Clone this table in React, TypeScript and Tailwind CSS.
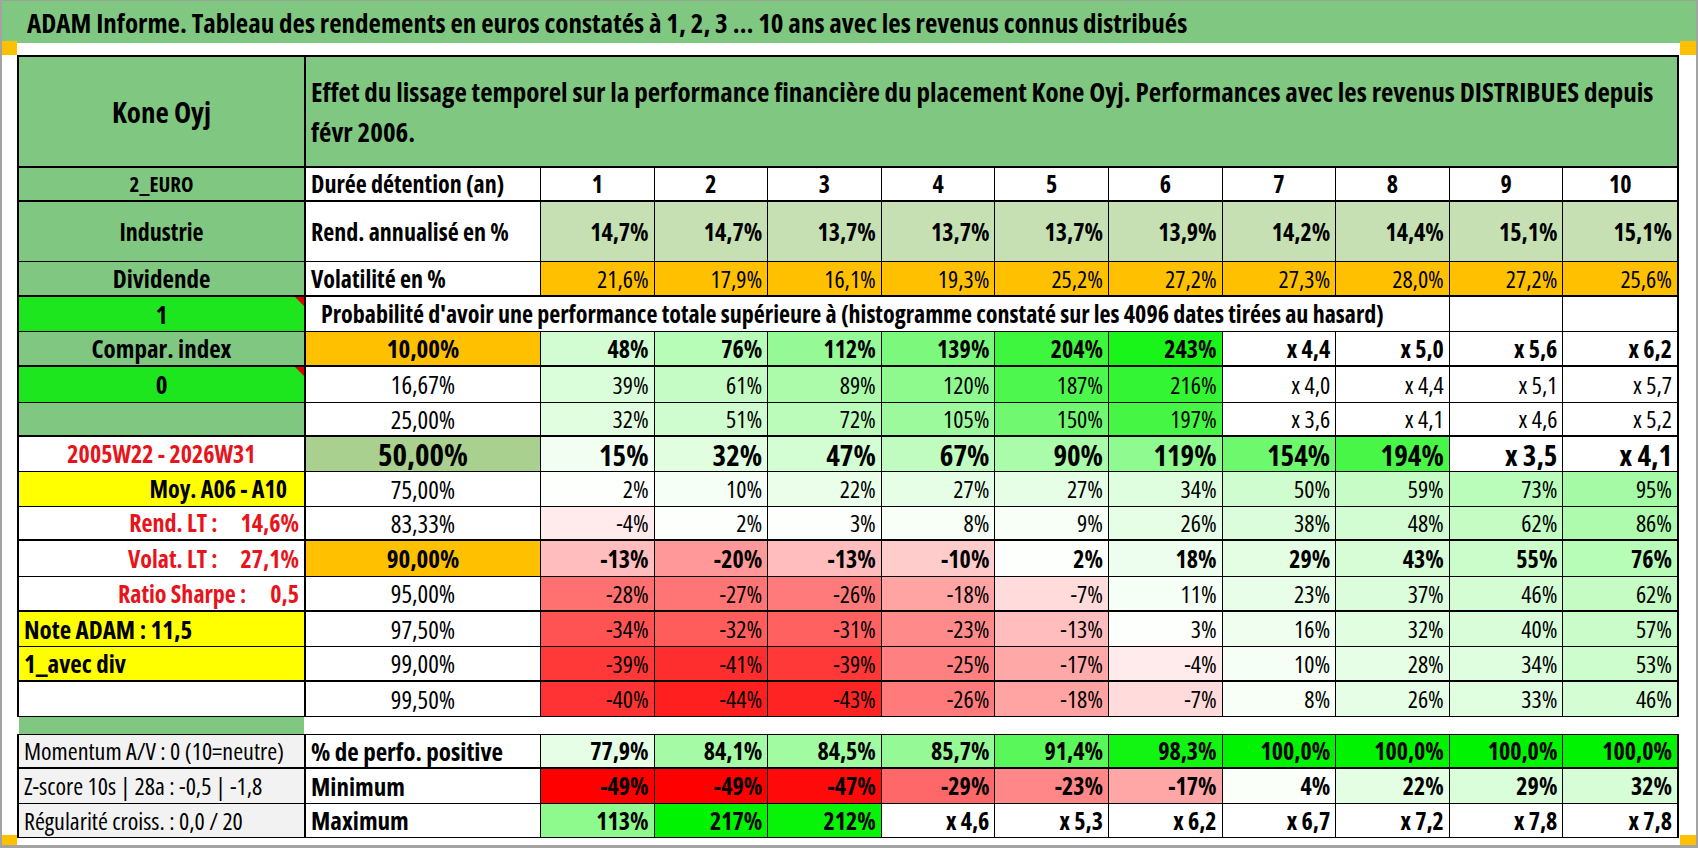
import React from "react";

const clamp = (t: number) => Math.max(0, Math.min(1, t));
const green = (t: number) => {
  const k = clamp(t);
  const r = Math.round(255 * (1 - k));
  const g = Math.round(255 - 12 * k);
  return `rgb(${r},${g},${r})`;
};
const red = (t: number) => {
  const k = clamp(t);
  const c = Math.round(255 * (1 - k));
  return `rgb(255,${c},${c})`;
};
const num = (s: string) => (s.startsWith("x") ? null : parseFloat(s.replace(",", ".").replace("%", "")));
const mainColor = (s: string) => {
  const v = num(s);
  if (v === null) return "#ffffff";
  return v >= 0 ? green(v / 270) : red(-v / 50);
};

type Row = {
  h: string;
  b: string;
  left: React.ReactNode;
  leftCls: string;
  tri?: boolean;
  p: string;
  pCls: string;
  vals: string[];
  vCls: string;
};

const rows: Row[] = [
  {
    h: "h-[35px]", b: "border-b-2", left: "Compar. index", leftCls: "bg-[#80c882] justify-center font-bold text-[25px]",
    p: "10,00%", pCls: "bg-[#ffc000] font-bold text-[25px]",
    vals: ["48%", "76%", "112%", "139%", "204%", "243%", "x 4,4", "x 5,0", "x 5,6", "x 6,2"], vCls: "font-bold text-[24px]",
  },
  {
    h: "h-[36px]", b: "border-b", left: "0", leftCls: "bg-[#1ee61e] justify-center font-bold text-[25px]", tri: true,
    p: "16,67%", pCls: "bg-white text-[25px]",
    vals: ["39%", "61%", "89%", "120%", "187%", "216%", "x 4,0", "x 4,4", "x 5,1", "x 5,7"], vCls: "text-[24px]",
  },
  {
    h: "h-[34px]", b: "border-b-2", left: "", leftCls: "bg-[#80c882]",
    p: "25,00%", pCls: "bg-white text-[25px]",
    vals: ["32%", "51%", "72%", "105%", "150%", "197%", "x 3,6", "x 4,1", "x 4,6", "x 5,2"], vCls: "text-[24px]",
  },
  {
    h: "h-[35px]", b: "border-b", left: "2005W22 - 2026W31", leftCls: "bg-white justify-center font-bold text-[24px] text-[#e8141b]",
    p: "50,00%", pCls: "bg-[#a9d08e] font-bold text-[31px]",
    vals: ["15%", "32%", "47%", "67%", "90%", "119%", "154%", "194%", "x 3,5", "x 4,1"], vCls: "font-bold text-[29px]",
  },
  {
    h: "h-[35px]", b: "border-b", left: "Moy. A06 - A10", leftCls: "bg-[#ffff00] justify-end pr-[17px] font-bold text-[24px]",
    p: "75,00%", pCls: "bg-white text-[25px]",
    vals: ["2%", "10%", "22%", "27%", "27%", "34%", "50%", "59%", "73%", "95%"], vCls: "text-[24px]",
  },
  {
    h: "h-[34px]", b: "border-b-2",
    left: (<><span>Rend. LT :</span><span>14,6%</span></>),
    leftCls: "bg-white justify-end gap-[23px] pr-[5px] font-bold text-[24px] text-[#e8141b]",
    p: "83,33%", pCls: "bg-white text-[25px]",
    vals: ["-4%", "2%", "3%", "8%", "9%", "26%", "38%", "48%", "62%", "86%"], vCls: "text-[24px]",
  },
  {
    h: "h-[36px]", b: "border-b",
    left: (<><span>Volat. LT :</span><span>27,1%</span></>),
    leftCls: "bg-white justify-end gap-[23px] pr-[5px] font-bold text-[24px] text-[#e8141b]",
    p: "90,00%", pCls: "bg-[#ffc000] font-bold text-[25px]",
    vals: ["-13%", "-20%", "-13%", "-10%", "2%", "18%", "29%", "43%", "55%", "76%"], vCls: "font-bold text-[24px]",
  },
  {
    h: "h-[35px]", b: "border-b-2",
    left: (<><span>Ratio Sharpe :</span><span>0,5</span></>),
    leftCls: "bg-white justify-end gap-[24px] pr-[5px] font-bold text-[24px] text-[#e8141b]",
    p: "95,00%", pCls: "bg-white text-[25px]",
    vals: ["-28%", "-27%", "-26%", "-18%", "-7%", "11%", "23%", "37%", "46%", "62%"], vCls: "text-[24px]",
  },
  {
    h: "h-[35px]", b: "border-b", left: "Note ADAM : 11,5", leftCls: "bg-[#ffff00] justify-start pl-[5px] font-bold text-[25px]",
    p: "97,50%", pCls: "bg-white text-[25px]",
    vals: ["-34%", "-32%", "-31%", "-23%", "-13%", "3%", "16%", "32%", "40%", "57%"], vCls: "text-[24px]",
  },
  {
    h: "h-[35px]", b: "border-b-2", left: "1_avec div", leftCls: "bg-[#ffff00] justify-start pl-[5px] font-bold text-[25px]",
    p: "99,00%", pCls: "bg-white text-[25px]",
    vals: ["-39%", "-41%", "-39%", "-25%", "-17%", "-4%", "10%", "28%", "34%", "53%"], vCls: "text-[24px]",
  },
  {
    h: "h-[35px]", b: "border-b", left: "", leftCls: "bg-white",
    p: "99,50%", pCls: "bg-white text-[25px]",
    vals: ["-40%", "-44%", "-43%", "-26%", "-18%", "-7%", "8%", "26%", "33%", "46%"], vCls: "text-[24px]",
  },
];

const GRID = "grid grid-cols-[287px_235px_repeat(10,minmax(0,1fr))]";
const CELL = "flex items-center whitespace-nowrap leading-none border-black";

function Tri() {
  return (
    <span className="absolute top-0 right-0 w-0 h-0 border-t-[9px] border-t-[#e00000] border-l-[9px] border-l-transparent" />
  );
}

function ValueCells({ vals, cls, color }: { vals: string[]; cls: string; color: (s: string) => string }) {
  return (
    <>
      {vals.map((v, i) => (
        <div
          key={i}
          className={`${CELL} justify-end pr-[5px] ${i < 9 ? "border-r" : ""} ${cls}`}
          style={{ backgroundColor: color(v) }}
        >
          {v}
        </div>
      ))}
    </>
  );
}

const posColor = (s: string) => {
  const v = num(s) ?? 0;
  return green((v - 75.5) / 24.5);
};
const minColor = (s: string) => {
  const v = num(s) ?? 0;
  return v >= 0 ? green(v / 200) : red(-v / 49);
};
const maxColor = (s: string) => {
  const v = num(s);
  if (v === null) return "#ffffff";
  return green((v - 30) / 187);
};

export default function App() {
  return (
    <div className="relative w-[1698px] h-[848px] bg-white overflow-hidden text-black font-['Liberation_Sans_Narrow','Open_Sans','Liberation_Sans',sans-serif] [font-stretch:condensed] border-x-2 border-b-[3px] border-[#a3a3a3]">
      {/* Title bar */}
      <div className="h-[43px] bg-[#80c882] border-t border-[#9aa59a] flex items-center pl-[25px] font-bold text-[27px] leading-none whitespace-nowrap">
        ADAM Informe. Tableau des rendements en euros constatés à 1, 2, 3 … 10 ans avec les revenus connus distribués
      </div>

      {/* Main table */}
      <div className="ml-[15px] mt-[12px] w-[1662px]">
        <div className="border-t-2 border-x-2 border-black">
          {/* header row */}
          <div className={`${GRID} h-[111px] border-b-2 border-black`}>
            <div className={`${CELL} justify-center bg-[#80c882] border-r-2 font-bold text-[29px]`}>Kone Oyj</div>
            <div className="col-span-11 bg-[#80c882] flex flex-col justify-center pl-[5px] font-bold text-[27px] leading-[40px] whitespace-nowrap">
              <span>Effet du lissage temporel sur la performance financière du placement Kone Oyj. Performances avec les revenus DISTRIBUES depuis</span>
              <span>févr 2006.</span>
            </div>
          </div>

          {/* 2_EURO row */}
          <div className={`${GRID} h-[34px] border-b-2 border-black`}>
            <div className={`${CELL} justify-center bg-[#80c882] border-r-2 font-bold text-[21px]`}>2_EURO</div>
            <div className={`${CELL} pl-[5px] bg-white border-r font-bold text-[24px]`}>Durée détention (an)</div>
            {Array.from({ length: 10 }, (_, i) => (
              <div key={i} className={`${CELL} justify-center bg-white font-bold text-[24px] ${i < 9 ? "border-r" : ""}`}>
                {i + 1}
              </div>
            ))}
          </div>

          {/* Industrie row */}
          <div className={`${GRID} h-[60px] border-b border-black`}>
            <div className={`${CELL} justify-center bg-[#80c882] border-r-2 font-bold text-[24px]`}>Industrie</div>
            <div className={`${CELL} pl-[5px] bg-white border-r font-bold text-[24px]`}>Rend. annualisé en %</div>
            <ValueCells
              vals={["14,7%", "14,7%", "13,7%", "13,7%", "13,7%", "13,9%", "14,2%", "14,4%", "15,1%", "15,1%"]}
              cls="font-bold text-[24px]"
              color={() => "#c6e0b4"}
            />
          </div>

          {/* Dividende row */}
          <div className={`${GRID} h-[35px] border-b-2 border-black`}>
            <div className={`${CELL} justify-center bg-[#80c882] border-r-2 font-bold text-[25px]`}>Dividende</div>
            <div className={`${CELL} pl-[5px] bg-white border-r font-bold text-[24px]`}>Volatilité en %</div>
            <ValueCells
              vals={["21,6%", "17,9%", "16,1%", "19,3%", "25,2%", "27,2%", "27,3%", "28,0%", "27,2%", "25,6%"]}
              cls="text-[24px]"
              color={() => "#ffc000"}
            />
          </div>

          {/* Probabilité row */}
          <div className={`${GRID} h-[35px] border-b border-black`}>
            <div className={`${CELL} relative justify-center bg-[#1ee61e] border-r-2 font-bold text-[25px]`}>
              1
              <Tri />
            </div>
            <div className={`${CELL} col-span-9 pl-[15px] bg-white border-r font-bold text-[24px]`}>
              Probabilité d'avoir une performance totale supérieure à (histogramme constaté sur les 4096 dates tirées au hasard)
            </div>
            <div className={`${CELL} bg-white border-r`} />
            <div className={`${CELL} bg-white`} />
          </div>

          {rows.map((r, idx) => (
            <div key={idx} className={`${GRID} ${r.h} ${r.b} border-black`}>
              <div className={`${CELL} relative border-r-2 ${r.leftCls}`}>
                {r.left}
                {r.tri && <Tri />}
              </div>
              <div className={`${CELL} justify-center border-r ${r.pCls}`}>{r.p}</div>
              <ValueCells vals={r.vals} cls={r.vCls} color={mainColor} />
            </div>
          ))}
        </div>

        {/* separator strip */}
        <div className={`${GRID} h-[17px]`}>
          <div className="bg-[#80c882] ml-[2px]" />
        </div>

        {/* bottom block */}
        <div className="border-t border-x-2 border-black">
          <div className={`${GRID} h-[34px] border-b-2 border-black`}>
            <div className={`${CELL} pl-[5px] bg-[#f2f2f2] border-r-2 text-[24px]`}>Momentum A/V : 0 (10=neutre)</div>
            <div className={`${CELL} pl-[5px] bg-white border-r font-bold text-[25px]`}>% de perfo. positive</div>
            <ValueCells
              vals={["77,9%", "84,1%", "84,5%", "85,7%", "91,4%", "98,3%", "100,0%", "100,0%", "100,0%", "100,0%"]}
              cls="font-bold text-[24px]"
              color={posColor}
            />
          </div>
          <div className={`${GRID} h-[35px] border-b border-black`}>
            <div className={`${CELL} pl-[5px] bg-[#f2f2f2] border-r-2 text-[24px]`}>Z-score 10s | 28a : -0,5 | -1,8</div>
            <div className={`${CELL} pl-[5px] bg-white border-r font-bold text-[25px]`}>Minimum</div>
            <ValueCells
              vals={["-49%", "-49%", "-47%", "-29%", "-23%", "-17%", "4%", "22%", "29%", "32%"]}
              cls="font-bold text-[24px]"
              color={minColor}
            />
          </div>
          <div className={`${GRID} h-[34px] border-b border-black`}>
            <div className={`${CELL} pl-[5px] bg-[#f2f2f2] border-r-2 text-[24px]`}>Régularité croiss. : 0,0 / 20</div>
            <div className={`${CELL} pl-[5px] bg-white border-r font-bold text-[25px]`}>Maximum</div>
            <ValueCells
              vals={["113%", "217%", "212%", "x 4,6", "x 5,3", "x 6,2", "x 6,7", "x 7,2", "x 7,8", "x 7,8"]}
              cls="font-bold text-[24px]"
              color={maxColor}
            />
          </div>
        </div>
      </div>

      {/* corner handles */}
      <div className="absolute left-0 top-[41px] w-[15px] h-[14px] bg-[#ffc000]" />
      <div className="absolute right-0 top-[41px] w-[16px] h-[14px] bg-[#ffc000]" />
      <div className="absolute left-0 bottom-0 w-[15px] h-[10px] bg-[#ffc000]" />
      <div className="absolute right-0 bottom-0 w-[16px] h-[10px] bg-[#ffc000]" />
    </div>
  );
}
